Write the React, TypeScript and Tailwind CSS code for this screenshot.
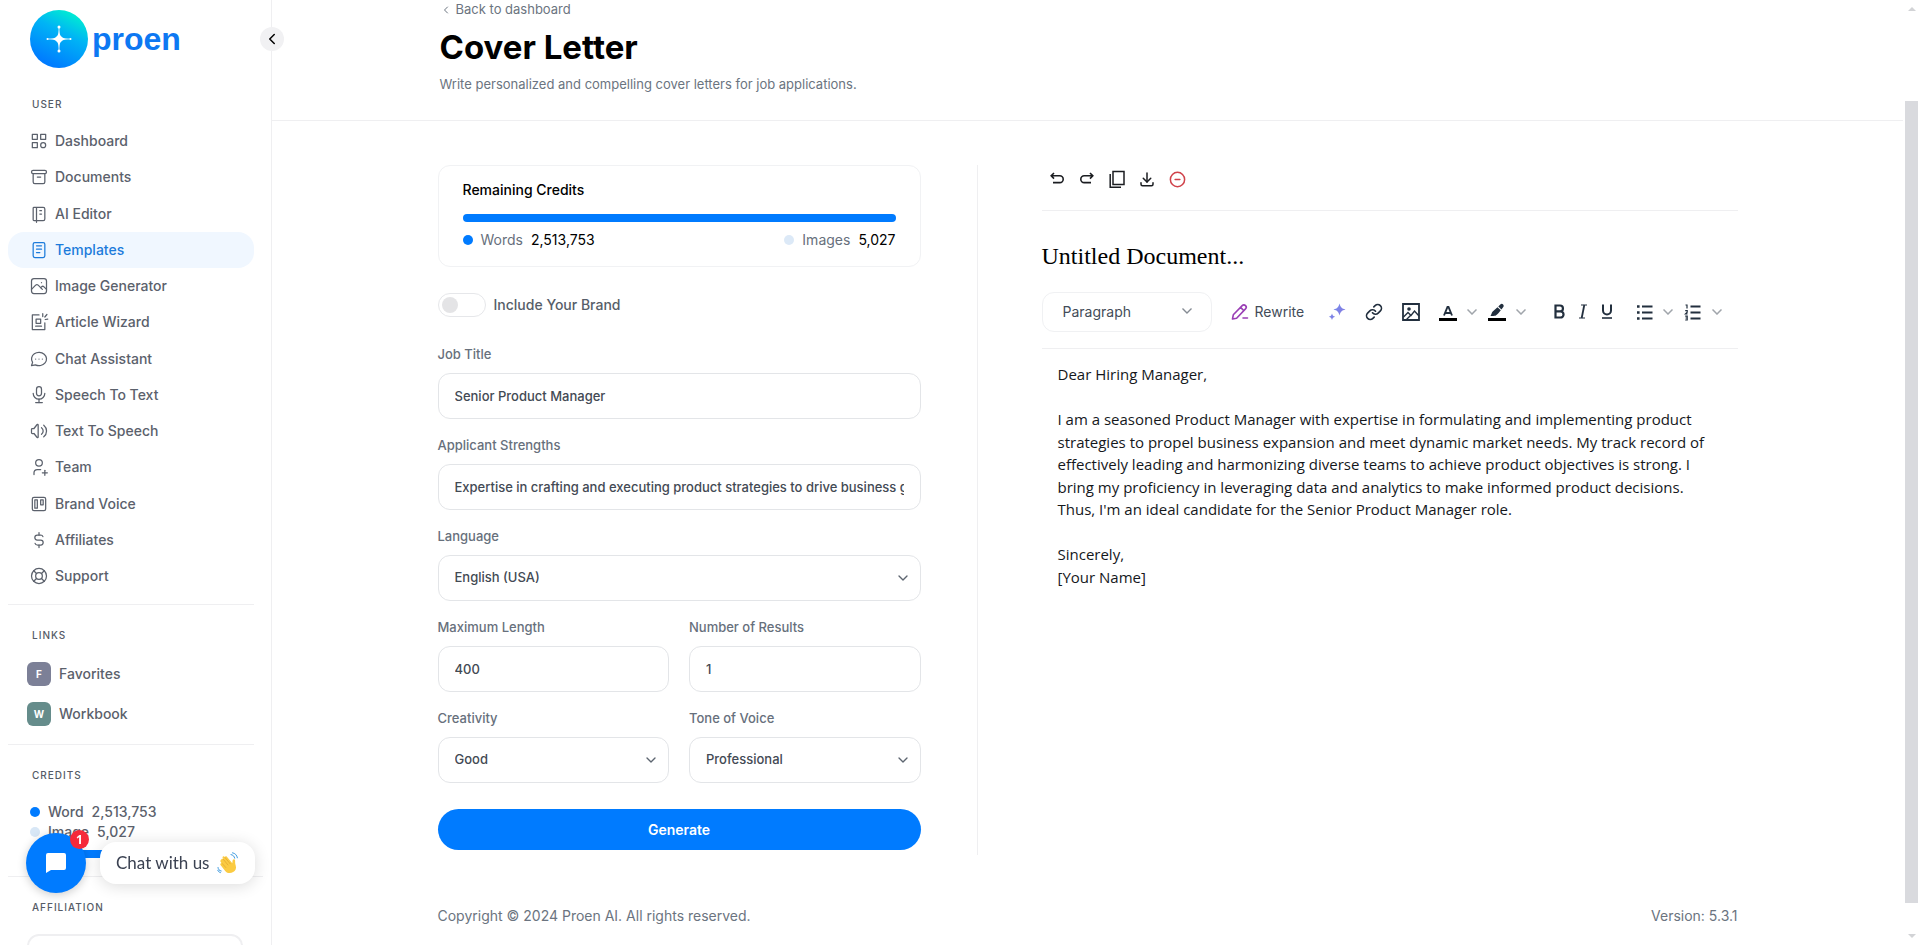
import React, { useState } from 'react';
import { Link } from 'lucide-react';
import {
  TbArchive,
  TbBrandTrello,
  TbCategory,
  TbChevronDown,
  TbChevronLeft,
  TbCircleMinus,
  TbCurrencyDollar,
  TbDownload,
  TbLifebuoy,
  TbMicrophone,
  TbNotebook,
  TbNotes,
  TbPhoto,
  TbUserPlus,
  TbVolume,
} from 'react-icons/tb';

const stroke = {
  viewBox: '0 0 24 24',
  fill: 'none',
  stroke: 'currentColor',
  strokeLinecap: 'round' as const,
  strokeLinejoin: 'round' as const,
};

function WizardIcon({ className }: { className?: string }) {
  return (
    <svg {...stroke} strokeWidth={1.5} className={className}>
      <path d="M12 3.500H4v17.500h15v-8" />
      <path d="M8.500 8.500h5.500v5H8.500zM8 17h7M16.500 2v3.500M21.500 3l-2.500 3M19.500 9l3-.5" />
    </svg>
  );
}

function ChatIcon({ className }: { className?: string }) {
  return (
    <svg {...stroke} strokeWidth={1.5} className={className}>
      <path d="M3 20l1.3-3.9c-2.324-3.437-1.426-7.872 2.1-10.374 3.526-2.501 8.59-2.296 11.845.48 3.255 2.777 3.695 7.266 1.029 10.501S11.659 20.922 7.7 19L3 20" />
      <path d="M8 12v.01M12 12v.01M16 12v.01" />
    </svg>
  );
}

const navItems = [
  { name: 'Dashboard', icon: TbCategory },
  { name: 'Documents', icon: TbArchive },
  { name: 'AI Editor', icon: TbNotebook },
  { name: 'Templates', icon: TbNotes, active: true },
  { name: 'Image Generator', icon: TbPhoto },
  { name: 'Article Wizard', icon: WizardIcon },
  { name: 'Chat Assistant', icon: ChatIcon },
  { name: 'Speech To Text', icon: TbMicrophone },
  { name: 'Text To Speech', icon: TbVolume },
  { name: 'Team', icon: TbUserPlus },
  { name: 'Brand Voice', icon: TbBrandTrello },
  { name: 'Affiliates', icon: TbCurrencyDollar },
  { name: 'Support', icon: TbLifebuoy },
];

function Logo() {
  return (
    <a href="#" className="flex items-center gap-1 pl-[30px]">
      <svg viewBox="0 0 58 58" className="size-[58px]" aria-hidden="true">
        <defs>
          <linearGradient id="logo-fill" x1="0.8" y1="0.05" x2="0.35" y2="0.95">
            <stop offset="0" stopColor="#00f0d0" />
            <stop offset="0.4" stopColor="#00b4f5" />
            <stop offset="1" stopColor="#007bff" />
          </linearGradient>
        </defs>
        <circle cx="29" cy="29" r="29" fill="url(#logo-fill)" />
        <path d="M29 20c.6 6.200 2.800 8.400 9 9-6.200.6-8.400 2.800-9 9-.6-6.200-2.800-8.400-9-9 6.200-.6 8.400-2.800 9-9z" fill="#fff" />
        <path d="M29 17v24M17.500 29h23" stroke="#fff" strokeWidth="0.8" />
        <g fill="#fff">
          <circle cx="29" cy="17" r="1.500" />
          <circle cx="29" cy="41" r="1.500" />
          <circle cx="17.500" cy="29" r="1" />
          <circle cx="40.500" cy="29" r="1" />
        </g>
      </svg>
      <span className="font-['Liberation_Sans',sans-serif] text-[32px] leading-10 font-bold text-[#0d78f2]">proen</span>
    </a>
  );
}

function SectionTitle({ children }: { children: React.ReactNode }) {
  return <h2 className="pl-8 text-[10px] leading-4 tracking-widest text-[#555b66] uppercase">{children}</h2>;
}

function Sidebar() {
  return (
    <aside className="relative w-[272px] shrink-0 border-r border-[#efeff1]">
      <div className="flex h-full flex-col overflow-hidden pt-[10px] text-sm font-medium text-[#5b616c]">
        <Logo />
        <div className="mt-7">
          <SectionTitle>User</SectionTitle>
        </div>
        <ul className="mt-[11px] flex h-[471px] shrink-0 flex-col justify-between pr-[17px] pl-2">
          {navItems.map((item) => (
            <li key={item.name}>
              <a
                href="#"
                className={`flex h-9 items-center gap-[6px] rounded-2xl pl-[21px] ${
                  item.active ? 'bg-[#f0f7ff] text-[#1c7bdb]' : 'hover:bg-gray-50'
                }`}
              >
                <item.icon className="size-5" strokeWidth={1.5} />
                <span>{item.name}</span>
              </a>
            </li>
          ))}
        </ul>
        <hr className="mt-[10px] mr-[17px] ml-2 border-[#efeff1]" />
        <div className="mt-[22px]">
          <SectionTitle>Links</SectionTitle>
        </div>
        <ul className="mt-[19px] flex flex-col gap-4 pl-[27px]">
          <li>
            <a href="#" className="flex h-6 items-center gap-2">
              <span className="flex size-6 items-center justify-center rounded-md bg-[#7c8097] text-[10px] font-bold text-white">F</span>
              Favorites
            </a>
          </li>
          <li>
            <a href="#" className="flex h-6 items-center gap-2">
              <span className="flex size-6 items-center justify-center rounded-md bg-[#658c8b] text-[10px] font-bold text-white">W</span>
              Workbook
            </a>
          </li>
        </ul>
        <hr className="mt-[18px] mr-[17px] ml-2 border-[#efeff1]" />
        <div className="mt-[22px]">
          <SectionTitle>Credits</SectionTitle>
        </div>
        <div className="mt-[19px] flex flex-col pr-[30px] pl-[30px]">
          <div className="flex h-5 items-center">
            <span className="size-[10px] rounded-full bg-[#007bff]" />
            <span className="ml-2">Word</span>
            <span className="ml-2">2,513,753</span>
          </div>
          <div className="flex h-5 items-center">
            <span className="size-[10px] rounded-full bg-[#d8e7f6]" />
            <span className="ml-2">Image</span>
            <span className="ml-2">5,027</span>
          </div>
          <div className="mt-2 h-2 rounded-full bg-[#007bff]" />
        </div>
        <hr className="mt-[18px] mr-2 ml-2 border-[#efeff1]" />
        <div className="mt-[22px]">
          <SectionTitle>Affiliation</SectionTitle>
        </div>
        <div className="mt-[19px] mr-[28px] ml-[27px] h-24 shrink-0 rounded-xl border-2 border-[#efeff1]" />
      </div>
      <button
        type="button"
        aria-label="Collapse sidebar"
        className="absolute top-[27px] -right-[13px] flex size-6 items-center justify-center rounded-full bg-[#f1f1f3] text-black"
      >
        <TbChevronLeft className="size-[18px]" />
      </button>
    </aside>
  );
}

function WaveEmoji() {
  return (
    <svg viewBox="0 0 22 22" className="size-[22px]" role="img" aria-label="waving hand">
      <path
        d="M4.500 7.200c.9-.7 1.800-.2 2.400.5L5.600 5.700c-.5-.9.9-2 1.700-1.100l.7.900c-.3-1 .9-1.800 1.700-1l5.600 6.800c.2-1.500.1-2.600.6-3.500.6-1 2.100-.5 2.200.7.100 1.800-.1 3 .6 4.900 1 2.900-.3 5.300-2.500 6.700-2.900 1.700-6 1.200-8-1.200L3.500 13c-.7-.9.3-2 1.200-1.500L3.600 9.800c-.6-.9.100-2.100.9-2.600z"
        fill="#fbcb42"
      />
      <path d="M5.200 11.500l3.600 4M6.200 7.200l4.800 5.800M8 5.500l5.200 6.300" stroke="#e0a42c" strokeWidth="0.7" fill="none" strokeLinecap="round" />
      <path d="M14 2.600c2 .3 3.300 1.600 3.700 3.600M15.500.8c2.700.5 4.400 2.300 4.900 5M1 15.500c.2 2 1.300 3.200 3.200 3.500M.8 18.300c.5 1.300 1.300 2 2.600 2.300" stroke="#3f9be0" strokeWidth="1" fill="none" strokeLinecap="round" />
    </svg>
  );
}

function ChatWidget() {
  return (
    <div className="fixed bottom-[52px] left-[26px] flex items-center gap-[14px]">
      <button
        type="button"
        aria-label="Open chat"
        className="relative flex size-[60px] items-center justify-center rounded-full bg-[#007bff] shadow-[0_2px_10px_rgba(0,0,0,0.2)]"
      >
        <svg viewBox="0 0 20 20" className="size-5" fill="#fff">
          <path d="M2 0h16a2 2 0 0 1 2 2v13a2 2 0 0 1-2 2H5l-5 3V2a2 2 0 0 1 2-2z" />
        </svg>
        <span className="absolute -top-[3px] -right-[3px] flex size-[19px] items-center justify-center rounded-full bg-[#f5293a] font-['Open_Sans',sans-serif] text-xs font-bold text-white">
          1
        </span>
      </button>
      <button
        type="button"
        className="flex h-[42px] items-center gap-2 rounded-2xl bg-white px-4 font-['Lato',sans-serif] text-[17px] text-[#3b4252] shadow-[0_2px_16px_rgba(0,0,0,0.14)]"
      >
        Chat with us
        <WaveEmoji />
      </button>
    </div>
  );
}

type FieldProps = { id: string; label: string; children: React.ReactNode };

function Field({ id, label, children }: FieldProps) {
  return (
    <div className="flex flex-col gap-[9px]">
      <label htmlFor={id} className="text-[13px] leading-5 font-medium text-[#67707c]">
        {label}
      </label>
      {children}
    </div>
  );
}

const control =
  'h-[46px] w-full rounded-xl border border-[#e3e5e8] bg-white px-4 text-[13px] font-medium text-[#434a54] outline-none focus:border-[#007bff]';

function SelectField({ id, label, value }: { id: string; label: string; value: string }) {
  return (
    <Field id={id} label={label}>
      <div className="relative">
        <select id={id} className={`${control} appearance-none`} defaultValue={value}>
          <option>{value}</option>
        </select>
        <TbChevronDown className="pointer-events-none absolute top-[15px] right-[10px] size-4 text-[#5d6570]" />
      </div>
    </Field>
  );
}

function GeneratorForm() {
  const [brand, setBrand] = useState(false);

  return (
    <form className="w-[483px] shrink-0" onSubmit={(e) => e.preventDefault()}>
      <section className="rounded-xl border border-[#f1f2f4] px-6 pt-[14px] pb-4">
        <h3 className="text-sm leading-5 font-medium text-black">Remaining Credits</h3>
        <div className="mt-[14px] h-2 rounded-full bg-[#007bff]" />
        <div className="mt-2 flex items-center justify-between text-sm leading-5">
          <div className="flex items-center">
            <span className="size-[10px] rounded-full bg-[#007bff]" />
            <span className="ml-2 text-[#67707c]">Words</span>
            <span className="ml-2 text-black">2,513,753</span>
          </div>
          <div className="flex items-center">
            <span className="size-[10px] rounded-full bg-[#dce9f7]" />
            <span className="ml-2 text-[#67707c]">Images</span>
            <span className="ml-2 text-black">5,027</span>
          </div>
        </div>
      </section>

      <label className="mt-[26px] flex h-6 w-fit items-center gap-2 text-sm font-medium text-[#565e69]">
        <input
          type="checkbox"
          checked={brand}
          onChange={() => setBrand(!brand)}
          className="h-6 w-12 appearance-none rounded-full border border-[#e6e7ea] bg-white before:mt-[3px] before:ml-[3px] before:block before:size-4 before:rounded-full before:bg-[#e4e4e6] checked:before:ml-[27px] checked:before:bg-[#007bff]"
        />
        Include Your Brand
      </label>

      <div className="mt-[27px] flex flex-col gap-4">
        <Field id="job-title" label="Job Title">
          <input id="job-title" type="text" className={control} defaultValue="Senior Product Manager" />
        </Field>
        <Field id="strengths" label="Applicant Strengths">
          <input
            id="strengths"
            type="text"
            className={control}
            defaultValue="Expertise in crafting and executing product strategies to drive business growth"
          />
        </Field>
        <SelectField id="language" label="Language" value="English (USA)" />
        <div className="grid grid-cols-2 gap-x-5 gap-y-4">
          <Field id="max-length" label="Maximum Length">
            <input id="max-length" type="text" className={control} defaultValue="400" />
          </Field>
          <Field id="results" label="Number of Results">
            <input id="results" type="text" className={control} defaultValue="1" />
          </Field>
          <SelectField id="creativity" label="Creativity" value="Good" />
          <SelectField id="tone" label="Tone of Voice" value="Professional" />
        </div>
      </div>

      <button type="submit" className="mt-[26px] h-[41px] w-full rounded-full bg-[#007bff] text-sm font-semibold text-white">
        Generate
      </button>
    </form>
  );
}

function UndoIcon({ className }: { className?: string }) {
  return (
    <svg viewBox="0 0 18 18" fill="none" stroke="currentColor" strokeWidth="1.6" className={className}>
      <path d="M6 3 3.200 5.800 6 8.600M3.200 5.800h8.600a3.400 3.400 0 0 1 0 6.800H5" />
    </svg>
  );
}

function ToolbarChevron({ label }: { label: string }) {
  return (
    <button type="button" aria-label={label} className="text-[#a0a5ab]">
      <svg viewBox="0 0 10 6" className="h-[6px] w-[10px]" fill="none" stroke="currentColor" strokeWidth="1.5">
        <path d="M.5.5 5 5 9.500.5" />
      </svg>
    </button>
  );
}

function EditorToolbar() {
  return (
    <div className="flex items-center border-b border-[#efeff1] pb-4 text-[#222f3e]">
      <div className="relative w-[170px] shrink-0">
        <select
          aria-label="Block format"
          className="h-10 w-full appearance-none rounded-xl border border-[#f0f1f3] bg-white px-5 text-sm text-[#434c58] outline-none"
        >
          <option>Paragraph</option>
        </select>
        <svg viewBox="0 0 10 6" className="pointer-events-none absolute top-4 right-5 h-[6px] w-[10px]" fill="none" stroke="#858b93" strokeWidth="1.4">
          <path d="M.5.5 5 5 9.500.5" />
        </svg>
      </div>
      <button type="button" className="ml-[19px] flex items-center gap-[6px] text-sm text-[#434c58]">
        <svg viewBox="0 0 18 18" className="size-[18px]" fill="none" stroke="#9a3fb5" strokeWidth="1.6" strokeLinecap="round" strokeLinejoin="round">
          <path d="M1.500 16l.8-4.200L11.200 2.600a2.300 2.300 0 0 1 3.300 3.300L5.600 15.200zM9.600 4.400l3.200 3.200M12 15h4.500" />
        </svg>
        Rewrite
      </button>
      <button type="button" aria-label="AI tools" className="ml-6">
        <svg viewBox="0 0 18 18" className="size-[18px]">
          <defs>
            <linearGradient id="spark" x1="0" y1="0" x2="1" y2="1">
              <stop offset="0" stopColor="#6f8df0" />
              <stop offset="1" stopColor="#8d78dc" />
            </linearGradient>
          </defs>
          <path
            d="M11.500.5c1.100 3.900 2.100 4.900 6 6-3.900 1.100-4.900 2.100-6 6-1.100-3.900-2.100-4.900-6-6 3.900-1.100 4.900-2.100 6-6zM4 10.500c.6 2.100 1.200 2.700 3.200 3.300-2 .6-2.600 1.200-3.200 3.200-.6-2-1.200-2.600-3.200-3.200 2-.6 2.600-1.200 3.200-3.300z"
            fill="url(#spark)"
          />
        </svg>
      </button>
      <button type="button" aria-label="Insert link" className="ml-[19px]">
        <Link className="size-[18px]" strokeWidth={2.2} />
      </button>
      <button type="button" aria-label="Insert image" className="ml-[19px]">
        <svg viewBox="0 0 18 18" className="size-[18px]" fill="none" stroke="currentColor" strokeWidth="1.8">
          <path d="M1 1h16v16H1z" />
          <path d="M1.500 14l4.500-4.500 3 3L12.500 8l4.500 5M4 17l5-5" strokeWidth="1.4" />
          <circle cx="7" cy="6" r="1.800" fill="currentColor" stroke="none" />
        </svg>
      </button>
      <button type="button" aria-label="Text color" className="ml-[19px]">
        <svg viewBox="0 0 18 18" className="size-[18px]" fill="none" stroke="currentColor" strokeWidth="1.900">
          <path d="M5 12.500 8.500 4h1l3.500 8.500M6.300 10h5.400" />
          <path d="M0 16.500h18" stroke="#000" strokeWidth="3" />
        </svg>
      </button>
      <div className="ml-[10px] flex">
        <ToolbarChevron label="Text color options" />
      </div>
      <button type="button" aria-label="Background color" className="ml-[11px]">
        <svg viewBox="0 0 18 18" className="size-[18px]" fill="currentColor">
          <path d="M12.300 1.400a2 2 0 0 1 2.800 2.900l-1.600 2.100-3.200-2.900zM9.500 4.200l3.300 3c-1.200 1.700-3 3.800-4.700 5-1.100.8-3.100.7-5.600.7 1-1.500 1-3.200 2.200-4.500z" />
          <path d="M0 15h18v3H0z" fill="#000" />
        </svg>
      </button>
      <div className="ml-[10px] flex">
        <ToolbarChevron label="Background color options" />
      </div>
      <button type="button" aria-label="Bold" className="ml-[27px]">
        <svg viewBox="0 0 13 18" className="h-[18px] w-[13px]" fill="none" stroke="currentColor" strokeWidth="2.200">
          <path d="M2.500 2.500H7a2.800 2.800 0 0 1 0 5.900H2.500zM2.500 8.400h5a3 3 0 0 1 0 6.100h-5z" />
        </svg>
      </button>
      <button type="button" aria-label="Italic" className="ml-3">
        <svg viewBox="0 0 10 18" className="h-[18px] w-[10px]" fill="none" stroke="currentColor" strokeWidth="1.300">
          <path d="M3 2h6M1 15h6" strokeWidth="1.200" />
          <path d="M6.300 2 3.700 15" strokeWidth="1.800" />
        </svg>
      </button>
      <button type="button" aria-label="Underline" className="ml-[13px]">
        <svg viewBox="0 0 12 18" className="h-[18px] w-3" fill="none" stroke="currentColor" strokeWidth="2">
          <path d="M2 1.500v6a4 4 0 0 0 8 0v-6" />
          <path d="M1 15h10" strokeWidth="1.600" />
        </svg>
      </button>
      <button type="button" aria-label="Bullet list" className="ml-[23px]">
        <svg viewBox="0 0 17 18" className="h-[18px] w-[17px]" fill="none" stroke="currentColor" strokeWidth="2">
          <path d="M6 3.500h10.500M6 9.500h10.500M6 15.500h10.500" />
          <path d="M1 3.500h2.600M1 9.500h2.600M1 15.500h2.600" strokeWidth="2.600" />
        </svg>
      </button>
      <div className="ml-[10px] flex">
        <ToolbarChevron label="Bullet list options" />
      </div>
      <button type="button" aria-label="Numbered list" className="ml-[11px]">
        <svg viewBox="0 0 17 18" className="h-[18px] w-[17px]" fill="none" stroke="currentColor" strokeWidth="2">
          <path d="M6.500 3.500h10M6.500 9.500h10M6.500 15.500h10" />
          <path d="M1.500 2H3v3.500M1.200 7.700h2v1.500l-1.700 1.600h2M1.200 13.200h2v3.800h-2M1.500 15h1.700" strokeWidth="1.200" />
        </svg>
      </button>
      <div className="ml-[11px] flex">
        <ToolbarChevron label="Numbered list options" />
      </div>
    </div>
  );
}

function DocumentEditor() {
  return (
    <section className="ml-16 min-w-0 flex-1">
      <div className="flex h-[46px] items-start gap-3 border-b border-[#efeff1] pt-[5px] pl-[6px] text-[#1b1d21]">
        <button type="button" aria-label="Undo">
          <UndoIcon className="size-[18px]" />
        </button>
        <button type="button" aria-label="Redo">
          <UndoIcon className="size-[18px] -scale-x-100" />
        </button>
        <button type="button" aria-label="Copy">
          <svg viewBox="0 0 18 18" className="size-[18px]" fill="none" stroke="currentColor" strokeWidth="1.500">
            <path d="M5 1.500h11v13H5z" />
            <path d="M2.200 4v13.200H13" />
          </svg>
        </button>
        <button type="button" aria-label="Download">
          <TbDownload className="size-[18px]" />
        </button>
        <button type="button" aria-label="Delete" className="text-[#d0424a]">
          <TbCircleMinus className="size-[19px]" strokeWidth={1.9} />
        </button>
      </div>
      <h2 className="mt-[29px] mb-5 font-['Liberation_Serif',serif] text-2xl leading-8 text-black">Untitled Document...</h2>
      <EditorToolbar />
      <article className="px-4 pt-[14px] font-['Open_Sans',sans-serif] text-[15px] leading-normal text-[#15181c]">
        <p>Dear Hiring Manager,</p>
        <br />
        <p>
          I am a seasoned Product Manager with expertise in formulating and implementing product strategies to propel business
          expansion and meet dynamic market needs. My track record of effectively leading and harmonizing diverse teams to achieve
          product objectives is strong. I bring my proficiency in leveraging data and analytics to make informed product decisions.
          Thus, I'm an ideal candidate for the Senior Product Manager role.
        </p>
        <br />
        <p>Sincerely,</p>
        <p>[Your Name]</p>
      </article>
    </section>
  );
}

function ScrollRail() {
  return (
    <div className="flex w-[17px] shrink-0 flex-col items-center justify-between py-[7px]" aria-hidden="true">
      <div className="border-x-4 border-b-4 border-x-transparent border-b-[#d2d3d6]" />
      <div className="mt-[90px] mb-[31px] w-[13px] flex-1 bg-[#d9dade]" />
      <div className="border-x-4 border-t-4 border-x-transparent border-t-[#d2d3d6]" />
    </div>
  );
}

export default function App() {
  return (
    <div className="flex h-screen overflow-hidden bg-white font-['Inter',sans-serif]">
      <Sidebar />
      <main className="flex min-w-0 flex-1 flex-col">
        <header className="border-b border-[#efeff1] pb-[26px]">
          <div className="mx-auto w-full max-w-[1300px] pl-[2px]">
            <a href="#" className="flex items-center gap-1 text-[13px] leading-[19px] text-[#6b7480]">
              <TbChevronLeft className="size-3" />
              Back to dashboard
            </a>
            <h1 className="mt-2 text-[33px] leading-10 font-bold text-black">Cover Letter</h1>
            <p className="mt-[7px] text-[13px] leading-5 text-[#6b7480]">
              Write personalized and compelling cover letters for job applications.
            </p>
          </div>
        </header>
        <div className="mx-auto mt-11 flex w-full max-w-[1300px]">
          <GeneratorForm />
          <div className="-mb-[5px] ml-14 w-px bg-[#efeff1]" />
          <DocumentEditor />
        </div>
        <footer className="mx-auto mt-14 flex w-full max-w-[1300px] justify-between text-sm leading-5 text-[#6b7480]">
          <p>Copyright © 2024 Proen AI. All rights reserved.</p>
          <p>Version: 5.3.1</p>
        </footer>
      </main>
      <ScrollRail />
      <ChatWidget />
    </div>
  );
}
